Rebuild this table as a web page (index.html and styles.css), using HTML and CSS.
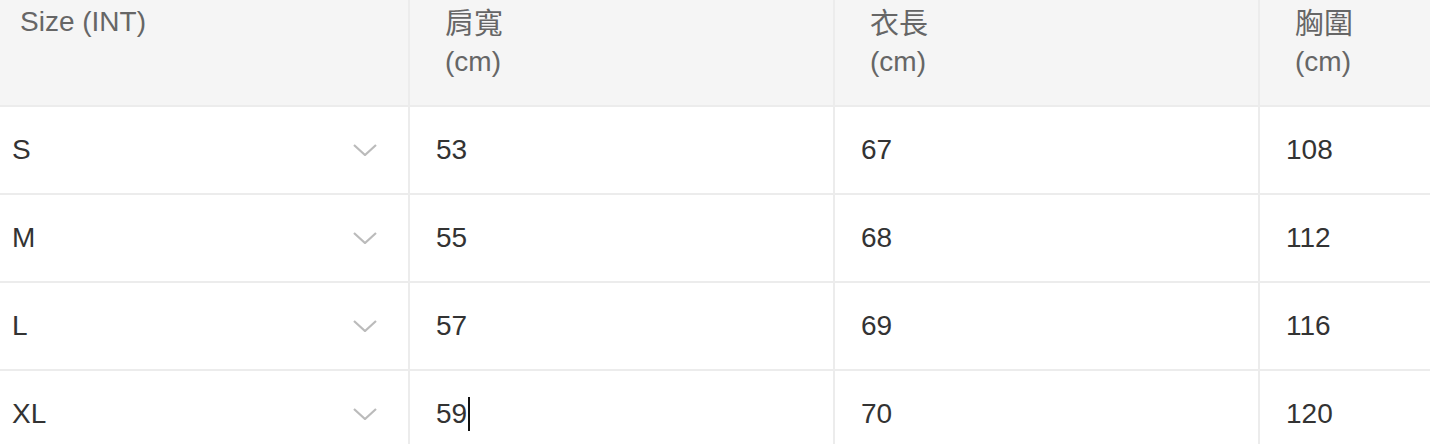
FILE: index.html
```html
<!DOCTYPE html>
<html lang="zh-Hant">
<head>
<meta charset="utf-8">
<title>Size table</title>
<link rel="stylesheet" href="styles.css">
</head>
<body>
<div class="table">
  <div class="row head">
    <div class="cell h first">Size (INT)</div>
    <div class="cell h"><span class="cjk">肩寬</span><br>(cm)</div>
    <div class="cell h"><span class="cjk">衣長</span><br>(cm)</div>
    <div class="cell h"><span class="cjk">胸圍</span><br>(cm)</div>
  </div>
  <div class="row">
    <div class="cell sel"><span>S</span><svg class="chev" width="24" height="12" viewBox="0 0 24 12"><polyline points="1,1 12,11 23,1"/></svg></div>
    <div class="cell">53</div>
    <div class="cell">67</div>
    <div class="cell">108</div>
  </div>
  <div class="row">
    <div class="cell sel"><span>M</span><svg class="chev" width="24" height="12" viewBox="0 0 24 12"><polyline points="1,1 12,11 23,1"/></svg></div>
    <div class="cell">55</div>
    <div class="cell">68</div>
    <div class="cell">112</div>
  </div>
  <div class="row">
    <div class="cell sel"><span>L</span><svg class="chev" width="24" height="12" viewBox="0 0 24 12"><polyline points="1,1 12,11 23,1"/></svg></div>
    <div class="cell">57</div>
    <div class="cell">69</div>
    <div class="cell">116</div>
  </div>
  <div class="row">
    <div class="cell sel"><span>XL</span><svg class="chev" width="24" height="12" viewBox="0 0 24 12"><polyline points="1,1 12,11 23,1"/></svg></div>
    <div class="cell">59<span class="caret"></span></div>
    <div class="cell">70</div>
    <div class="cell">120</div>
  </div>
</div>
</body>
</html>
```
FILE: styles.css
```css
html, body {
  margin: 0;
  padding: 0;
  background: #fff;
  overflow: hidden;
}
body {
  font-family: "Liberation Sans", Arial, "Noto Sans CJK TC", sans-serif;
  font-size: 28px;
  color: #333;
}
.table {
  width: 100%;
}
.row {
  display: grid;
  grid-template-columns: 410px 425px 425px 1fr;
  height: 88px;
}
.row.head {
  height: 107px;
  background: #f5f5f5;
}
.cell {
  box-sizing: border-box;
  border-right: 2px solid #ececec;
  border-bottom: 2px solid #ececec;
  padding-left: 26px;
  display: flex;
  align-items: center;
}
.cell:last-child {
  border-right: none;
}
.cell.h {
  display: block;
  padding: 2px 0 0 35px;
  line-height: 40px;
  color: #666;
}
.cell.h.first {
  padding-left: 20px;
}
.cjk {
  font-family: "Noto Sans CJK TC", sans-serif;
  font-size: 29px;
  line-height: 1;
  vertical-align: -3px;
}
.cell.sel {
  padding-left: 12px;
  padding-right: 31px;
  justify-content: space-between;
}
.chev {
  fill: none;
  stroke: #bbbbbb;
  stroke-width: 2.2;
}
.caret {
  display: inline-block;
  width: 2px;
  height: 34px;
  background: #111;
  margin-left: 1px;
}
```
